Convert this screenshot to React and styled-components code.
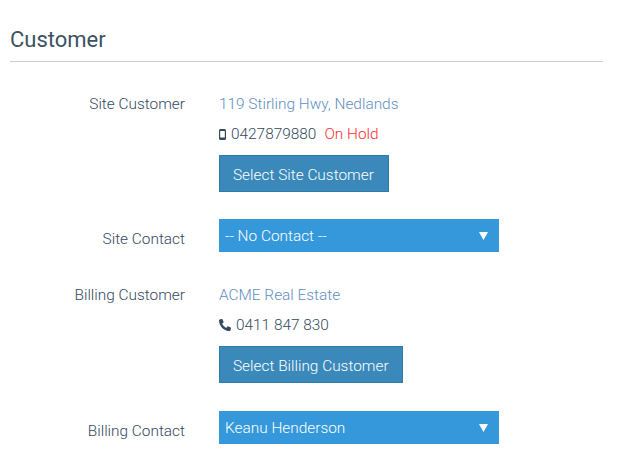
import styled, { createGlobalStyle } from 'styled-components';
import { FaPhoneAlt } from 'react-icons/fa';

const GlobalStyle = createGlobalStyle`
  html, body {
    margin: 0;
    background: #fff;
  }
  body {
    font-family: Roboto, "Liberation Sans", sans-serif;
    font-size: 15.4px;
    font-weight: 300;
    color: #34495e;
  }
`;

const Section = styled.section`
  width: 593px;
  padding: 26px 0 0 10px;
`;

const Heading = styled.h2`
  margin: 0;
  height: 35px;
  line-height: 27px;
  font-size: 22px;
  font-weight: 400;
  color: #3d5263;
  border-bottom: 1px solid #ccc;
`;

const Rows = styled.div`
  display: flex;
  flex-direction: column;
  padding-top: 30px;
`;

const Row = styled.div`
  display: grid;
  grid-template-columns: 175px 1fr;
  column-gap: 34px;
  margin-bottom: ${({ $gap }) => $gap}px;
`;

const Label = styled.div`
  text-align: right;
  line-height: 24px;
  padding-top: ${({ $top }) => $top || 0}px;
`;

const Stack = styled.div`
  display: flex;
  flex-direction: column;
  align-items: flex-start;
`;

const Line = styled.div`
  display: flex;
  align-items: center;
  height: 24px;
  margin-bottom: ${({ $gap }) => $gap || 6}px;
  white-space: pre;
`;

const CustomerLink = styled.a`
  color: #5f8fbf;
`;

const OnHold = styled.span`
  color: #ff2d2d;
  margin-left: 8px;
`;

const PhoneIcon = styled(FaPhoneAlt)`
  width: 12px;
  height: 12px;
  margin-right: 5px;
  color: #34495e;
`;

const MobileIcon = styled.svg`
  width: 7px;
  height: 11px;
  margin-right: 5px;
`;

const ActionButton = styled.button`
  height: 37px;
  padding: 2px 13.7px 0 13px;
  border: 1px solid #2f7ba8;
  background: #3a89ba;
  color: #fff;
  font: 300 15.4px Roboto, "Liberation Sans", sans-serif;
  text-align: left;
  cursor: pointer;
`;

const Select = styled.div`
  width: 280px;
  height: 33px;
  display: flex;
  align-items: center;
  justify-content: space-between;
  padding: 0 11px 0 6px;
  box-sizing: border-box;
  background: #3498db;
  color: #fff;
`;

const Caret = styled.svg`
  width: 9px;
  height: 8px;
`;

const SelectBox = ({ children }) => (
  <Select>
    <span>{children}</span>
    <Caret viewBox="0 0 9 8">
      <path d="M0 0h9L4.5 8z" fill="#fff" />
    </Caret>
  </Select>
);

export default function App() {
  return (
    <>
      <GlobalStyle />
      <Section>
        <Heading>Customer</Heading>
        <Rows>
          <Row $gap={27}>
            <Label>Site Customer</Label>
            <Stack>
              <Line>
                <CustomerLink>119 Stirling Hwy, Nedlands</CustomerLink>
              </Line>
              <Line $gap={9}>
                <MobileIcon viewBox="0 0 7 11">
                  <path
                    d="M1.5 0h4A1.5 1.5 0 0 1 7 1.5v8A1.5 1.5 0 0 1 5.5 11h-4A1.5 1.5 0 0 1 0 9.5v-8A1.5 1.5 0 0 1 1.5 0zM1.2 2v6.6h4.6V2z"
                    fill="#34495e"
                    fillRule="evenodd"
                  />
                </MobileIcon>
                0427879880
                <OnHold>On Hold</OnHold>
              </Line>
              <ActionButton>Select Site Customer</ActionButton>
            </Stack>
          </Row>
          <Row $gap={31}>
            <Label $top={8}>Site Contact</Label>
            <SelectBox>-- No Contact --</SelectBox>
          </Row>
          <Row $gap={28}>
            <Label>Billing Customer</Label>
            <Stack>
              <Line>
                <CustomerLink>ACME Real Estate</CustomerLink>
              </Line>
              <Line $gap={9}>
                <PhoneIcon />
                0411 847 830
              </Line>
              <ActionButton>Select Billing Customer</ActionButton>
            </Stack>
          </Row>
          <Row $gap={0}>
            <Label $top={8}>Billing Contact</Label>
            <SelectBox>Keanu Henderson</SelectBox>
          </Row>
        </Rows>
      </Section>
    </>
  );
}
